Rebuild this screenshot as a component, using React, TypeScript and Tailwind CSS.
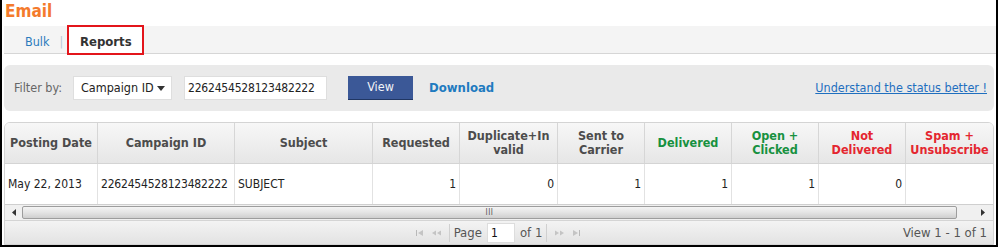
type Col = {
  label: string[];
  width: string;
  tone?: "green" | "red";
  value: string;
  align?: "left" | "right";
};

const columns: Col[] = [
  { label: ["Posting Date"], width: "w-[93px]", value: "May 22, 2013", align: "left" },
  { label: ["Campaign ID"], width: "w-[137px]", value: "2262454528123482222", align: "left" },
  { label: ["Subject"], width: "w-[138px]", value: "SUBJECT", align: "left" },
  { label: ["Requested"], width: "w-[87px]", value: "1" },
  { label: ["Duplicate+In", "valid"], width: "w-[98px]", value: "0" },
  { label: ["Sent to", "Carrier"], width: "w-[87px]", value: "1" },
  { label: ["Delivered"], width: "w-[87px]", tone: "green", value: "1" },
  { label: ["Open +", "Clicked"], width: "w-[87px]", tone: "green", value: "1" },
  { label: ["Not", "Delivered"], width: "w-[87px]", tone: "red", value: "0" },
  { label: ["Spam +", "Unsubscribe"], width: "w-[87px]", tone: "red", value: "" },
];

function toneClass(tone?: "green" | "red") {
  if (tone === "green") return "text-[#17913f]";
  if (tone === "red") return "text-[#e4262f]";
  return "text-[#4c4c4c]";
}

function PagerIcon({ kind }: { kind: "first" | "prev" | "next" | "last" }) {
  const flip = kind === "next" || kind === "last";
  return (
    <svg width="12" height="8" viewBox="0 0 12 8" className={flip ? "scale-x-[-1]" : ""}>
      {kind === "first" || kind === "last" ? (
        <>
          <rect x="2" y="1" width="1" height="6" fill="#b9b9b9" />
          <path d="M4 4 L9 1 L9 7 Z" fill="#c4c4c4" />
        </>
      ) : (
        <>
          <path d="M1 4 L5 1.5 L5 6.5 Z" fill="#c4c4c4" />
          <path d="M6 4 L10 1.5 L10 6.5 Z" fill="#c4c4c4" />
        </>
      )}
    </svg>
  );
}

export default function App() {
  return (
    <div
      className="w-[998px] h-[247px] bg-white border-l-2 border-r-2 border-b-2 border-black overflow-hidden text-[12.5px]"
      style={{ fontFamily: '"DejaVu Sans Condensed", "DejaVu Sans", sans-serif' }}
    >
      <div className="px-[3px] h-[26px] text-[17px] font-bold text-[#f47a2c] leading-[22px]">
        Email
      </div>

      {/* tabs */}
      <div className="ml-[2px] h-[28px] bg-[#f4f4f4] border-b border-[#d6d6d6] flex items-start">
        <div className="flex items-center h-[28px] pt-[4px] pl-[21px]">
          <span className="text-[#2b7bbd]">Bulk</span>
          <span className="ml-[10px] text-[#b8c6d4]">|</span>
        </div>
        <div className="ml-[4px] -mt-[1px] h-[30px] w-[77px] pt-[3px] bg-white border-2 border-[#e3151b] flex items-center justify-center font-bold text-[#333] text-[13px]">
          Reports
        </div>
      </div>

      {/* filter */}
      <div className="mx-[2px] mt-[11px] h-[46px] bg-[#eaeaea] rounded-md flex items-center pl-[10px] pr-[7px]">
        <span className="text-[#666]">Filter by:</span>
        <div className="ml-[11px] w-[99px] h-[24px] bg-white border border-[#dedede] flex items-center justify-between pl-[7px] pr-[6px] text-[#222]">
          <span>Campaign ID</span>
          <svg width="8" height="5" viewBox="0 0 8 5">
            <path d="M0 0 L8 0 L4 5 Z" fill="#333" />
          </svg>
        </div>
        <div className="ml-[12px] w-[143px] h-[24px] bg-white border border-[#dedede] flex items-center px-[3px] text-[12px] tracking-[-0.2px] text-[#222]">
          2262454528123482222
        </div>
        <div className="ml-[21px] w-[65px] h-[24px] bg-[#3b5897] border-b border-[#203663] flex items-center justify-center text-[#f2f4f8]">
          View
        </div>
        <span className="ml-[16px] font-bold text-[#1f7bc0] text-[13px]">Download</span>
        <span className="ml-auto text-[#1f6fbf] underline">Understand the status better !</span>
      </div>

      {/* grid */}
      <div className="mx-[2px] mt-[11px] border border-[#d4d4d4] rounded-t-md overflow-hidden">
        <div className="flex h-[41px] bg-gradient-to-b from-[#f7f7f7] to-[#e6e6e6] border-b border-[#d4d4d4]">
          {columns.map((c, i) => (
            <div
              key={i}
              className={`${c.width} shrink-0 flex flex-col items-center justify-center font-bold leading-[14px] text-center whitespace-nowrap ${toneClass(c.tone)} ${i < columns.length - 1 ? "border-r border-[#d6d6d6]" : ""}`}
            >
              {c.label.map((l) => (
                <span key={l}>{l}</span>
              ))}
            </div>
          ))}
        </div>
        <div className="flex h-[40px] bg-white text-[12px]">
          {columns.map((c, i) => (
            <div
              key={i}
              className={`${c.width} shrink-0 flex items-center px-[3px] text-[#222] whitespace-nowrap ${c.align === "left" ? "justify-start" : "justify-end"} ${i === 1 ? "tracking-[-0.2px]" : ""} ${i < columns.length - 1 ? "border-r border-[#e2e2e2]" : ""}`}
            >
              {c.value}
            </div>
          ))}
        </div>

        {/* horizontal scrollbar */}
        <div className="flex h-[16px] bg-[#f0f0f0] border-t border-[#cfcfcf]">
          <div className="w-[17px] flex items-center justify-center">
            <svg width="4" height="7" viewBox="0 0 4 7">
              <path d="M4 0 L0 3.5 L4 7 Z" fill="#333" />
            </svg>
          </div>
          <div className="flex-1 my-[1px] mr-[16px] rounded-[2px] border border-[#9d9d9d] bg-gradient-to-b from-[#f4f4f4] via-[#e4e4e4] to-[#cfcfcf] flex items-center justify-center">
            <span className="text-[8px] leading-none text-[#555] tracking-[0.5px]">III</span>
          </div>
          <div className="w-[20px] flex items-center justify-center">
            <svg width="4" height="7" viewBox="0 0 4 7">
              <path d="M0 0 L4 3.5 L0 7 Z" fill="#333" />
            </svg>
          </div>
        </div>

        {/* pager */}
        <div className="relative h-[24px] bg-gradient-to-b from-[#f3f3f3] to-[#e3e3e3] border-t border-[#d4d4d4] flex items-center justify-center text-[#555] text-[13px]">
          <div className="flex items-center ml-[-2px]">
            <PagerIcon kind="first" />
            <span className="ml-[5px]"><PagerIcon kind="prev" /></span>
            <span className="ml-[6px] h-[18px] border-l border-[#d0d0d0]" />
            <span className="ml-[4px]">Page</span>
            <div className="ml-[5px] w-[28px] h-[20px] bg-white border border-[#ddd] flex items-center px-[3px] text-[12px] text-[#111]">
              1
            </div>
            <span className="ml-[5px]">of 1</span>
            <span className="ml-[4px] h-[18px] border-l border-[#d0d0d0]" />
            <span className="ml-[6px]"><PagerIcon kind="next" /></span>
            <span className="ml-[5px]"><PagerIcon kind="last" /></span>
          </div>
          <span className="absolute right-[6px]">View 1 - 1 of 1</span>
        </div>
      </div>
    </div>
  );
}
